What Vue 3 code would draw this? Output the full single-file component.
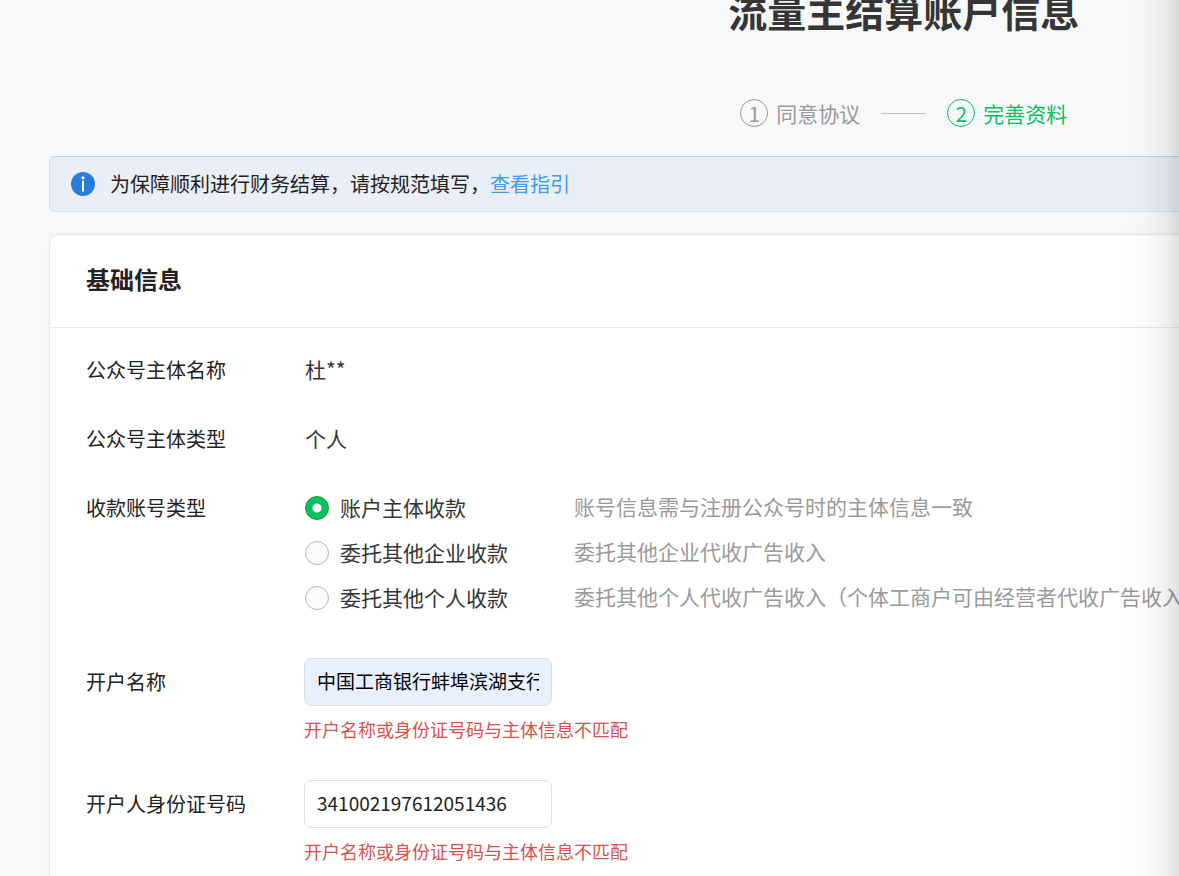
<script setup>
import { ref } from 'vue'

const payee = ref('self')
const accountName = ref('中国工商银行蚌埠滨湖支行')
const idNumber = ref('341002197612051436')
const mismatch = '开户名称或身份证号码与主体信息不匹配'

const info = [
  { label: '公众号主体名称', value: '杜**' },
  { label: '公众号主体类型', value: '个人' },
]

const options = [
  { id: 'self', name: '账户主体收款', note: '账号信息需与注册公众号时的主体信息一致' },
  { id: 'company', name: '委托其他企业收款', note: '委托其他企业代收广告收入' },
  { id: 'person', name: '委托其他个人收款', note: '委托其他个人代收广告收入（个体工商户可由经营者代收广告收入）' },
]
</script>

<template>
  <div class="viewport">
    <main class="page">
      <header class="header">
        <h1 class="title">流量主结算账户信息</h1>
        <ol class="steps">
          <li class="step"><span class="num">1</span><span class="step-name">同意协议</span></li>
          <li class="line" aria-hidden="true"></li>
          <li class="step active" aria-current="step"><span class="num">2</span><span class="step-name">完善资料</span></li>
        </ol>
      </header>

      <div class="notice">
        <svg class="notice-icon" viewBox="0 0 24 24" aria-hidden="true">
          <circle cx="12" cy="12" r="12" fill="#2b7bd9" />
          <circle cx="12" cy="5.8" r="1.5" fill="#fff" />
          <rect x="11" y="8.6" width="2" height="11" fill="#fff" />
        </svg>
        <p class="notice-text">为保障顺利进行财务结算，请按规范填写，<a href="#guide">查看指引</a></p>
      </div>

      <section class="card">
        <h2 class="card-title">基础信息</h2>
        <form class="form" @submit.prevent>
          <div v-for="row in info" :key="row.label" class="row">
            <span class="label">{{ row.label }}</span>
            <span class="value">{{ row.value }}</span>
          </div>

          <div class="row" role="radiogroup" aria-labelledby="payee-label">
            <span id="payee-label" class="label">收款账号类型</span>
            <div class="options">
              <div v-for="o in options" :key="o.id" class="option">
                <label class="choice">
                  <input v-model="payee" class="radio" type="radio" name="payee" :value="o.id" />
                  <span>{{ o.name }}</span>
                </label>
                <span class="note">{{ o.note }}</span>
              </div>
            </div>
          </div>

          <div class="row field first">
            <label class="label" for="account-name">开户名称</label>
            <div class="control">
              <input id="account-name" v-model="accountName" class="input filled" type="text" />
              <p class="error">{{ mismatch }}</p>
            </div>
          </div>

          <div class="row field">
            <label class="label" for="id-number">开户人身份证号码</label>
            <div class="control">
              <input id="id-number" v-model="idNumber" class="input" type="text" />
              <p class="error">{{ mismatch }}</p>
            </div>
          </div>
        </form>
      </section>
    </main>
    <div class="edge-shadow" aria-hidden="true"></div>
  </div>
</template>

<style>
body {
  background: #f7f8fa;
  overflow: hidden;
}
</style>

<style scoped>
.viewport {
  min-height: 100vh;
  overflow: hidden;
  background: #f7f8fa;
  color: #353535;
  font-family: "Noto Sans CJK SC", "Noto Sans", sans-serif;
  font-size: 21px;
  font-weight: 400;
}
.page {
  width: 145%;
  margin-left: 49px;
}
h1, h2, p, ol {
  margin: 0;
  padding: 0;
}
.header {
  display: flex;
  flex-direction: column;
  align-items: center;
  margin-top: -10px;
}
.title {
  font-size: 39px;
  line-height: 40px;
  font-weight: 700;
}
.steps {
  display: flex;
  align-items: center;
  gap: 21px;
  margin: 67px 0 27px;
  list-style: none;
  line-height: 32px;
  color: #9a9a9a;
}
.step {
  display: flex;
  align-items: center;
  gap: 8px;
}
.step.active {
  color: #07c160;
}
.num {
  box-sizing: border-box;
  width: 28px;
  height: 28px;
  border: 1px solid currentColor;
  border-radius: 50%;
  line-height: 27px;
  text-align: center;
}
.line {
  width: 45px;
  height: 1px;
  background: #bdbdbd;
}
.notice {
  display: flex;
  align-items: center;
  gap: 15px;
  box-sizing: border-box;
  min-height: 56px;
  padding: 0 21px;
  border: 1px solid #d5e4f2;
  border-top-color: #bdd2ea;
  border-radius: 6px;
  background: #eaeff7;
  color: #222;
}
.notice-icon {
  width: 24px;
  height: 24px;
}
.notice-text {
  font-size: 20px;
  line-height: 30px;
}
.notice-text a {
  color: #459ae9;
  text-decoration: none;
}
.card {
  margin-top: 22px;
  border: 1px solid #e6e7ea;
  border-radius: 9px;
  background: #fff;
  box-shadow: 0 0 4px rgba(0, 0, 0, 0.03);
}
.card-title {
  padding: 26px 36px 30px;
  border-bottom: 1px solid #ebebed;
  color: #222;
  font-size: 24px;
  line-height: 36px;
  font-weight: 700;
}
.form {
  display: flex;
  flex-direction: column;
  gap: 38px;
  padding: 26px 36px 40px;
}
.row {
  display: flex;
  align-items: flex-start;
  line-height: 31px;
}
.label {
  flex: 0 0 219px;
  color: #222;
  font-size: 20px;
}
.options {
  display: flex;
  flex-direction: column;
  gap: 14px;
}
.option {
  display: flex;
}
.choice {
  display: flex;
  align-items: center;
  gap: 11px;
  flex: 0 0 269px;
}
.radio {
  appearance: none;
  box-sizing: border-box;
  width: 24px;
  height: 24px;
  margin: 0;
  border: 1px solid #b4b5b7;
  border-radius: 50%;
  background: #fafbfc;
}
.radio:checked {
  border: 1px solid #119c2c;
  background: radial-gradient(circle, #fff 4px, #07c160 5px);
}
.note {
  color: #9a9a9a;
  line-height: 29px;
  white-space: nowrap;
}
.first {
  margin-top: 7px;
}
.field .label {
  flex-basis: 218px;
  line-height: 47px;
}
.input {
  display: block;
  box-sizing: border-box;
  width: 248px;
  height: 48px;
  padding: 0 12px 3px;
  border: 1px solid #dedfe1;
  border-radius: 7px;
  outline: none;
  background: #fff;
  color: #222;
  font: inherit;
  font-size: 19px;
}
.filled {
  background: #e8f0fe;
  color: #000;
}
.error {
  margin: 12px 0 2px;
  color: #d9514c;
  font-size: 18px;
  line-height: 22px;
}
.edge-shadow {
  position: fixed;
  inset: 0 0 0 auto;
  width: 56px;
  background: linear-gradient(to right, transparent, rgba(0, 0, 0, 0.01) 35%, rgba(0, 0, 0, 0.05) 72%, rgba(0, 0, 0, 0.12));
  pointer-events: none;
}
</style>
